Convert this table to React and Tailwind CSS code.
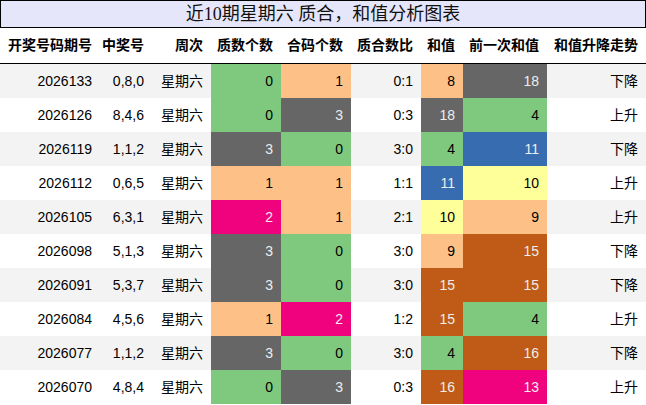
import React from "react";

const C = {
  g: "bg-[#7fc97f] text-black",
  o: "bg-[#fdc086] text-black",
  y: "bg-[#ffff99] text-black",
  b: "bg-[#386cb0] text-[#eeeeee]",
  p: "bg-[#f0027f] text-[#eeeeee]",
  r: "bg-[#bf5b17] text-[#eeeeee]",
  k: "bg-[#666666] text-[#eeeeee]",
};

const rows = [
  ["2026133", "0,8,0", "0", "g", "1", "o", "0:1", "8", "o", "18", "k", "下降"],
  ["2026126", "8,4,6", "0", "g", "3", "k", "0:3", "18", "k", "4", "g", "上升"],
  ["2026119", "1,1,2", "3", "k", "0", "g", "3:0", "4", "g", "11", "b", "下降"],
  ["2026112", "0,6,5", "1", "o", "1", "o", "1:1", "11", "b", "10", "y", "上升"],
  ["2026105", "6,3,1", "2", "p", "1", "o", "2:1", "10", "y", "9", "o", "上升"],
  ["2026098", "5,1,3", "3", "k", "0", "g", "3:0", "9", "o", "15", "r", "下降"],
  ["2026091", "5,3,7", "3", "k", "0", "g", "3:0", "15", "r", "15", "r", "下降"],
  ["2026084", "4,5,6", "1", "o", "2", "p", "1:2", "15", "r", "4", "g", "上升"],
  ["2026077", "1,1,2", "3", "k", "0", "g", "3:0", "4", "g", "16", "r", "下降"],
  ["2026070", "4,8,4", "0", "g", "3", "k", "0:3", "16", "r", "13", "p", "上升"],
];

const widths = ["w-[100px]", "w-[52px]", "w-[59px]", "w-[70px]", "w-[70px]", "w-[70px]", "w-[42px]", "w-[84px]", "w-[99px]"];
const headers = ["开奖号码期号", "中奖号", "周次", "质数个数", "合码个数", "质合数比", "和值", "前一次和值", "和值升降走势"];

function Cell({ w, cls = "", children }) {
  return (
    <div className={`${w} shrink-0 flex items-center justify-end pr-2 h-full ${cls}`}>{children}</div>
  );
}

export default function App() {
  return (
    <div
      className="w-[646px] h-[405px] bg-white overflow-hidden text-[14px] text-black"
      style={{ fontFamily: '"Liberation Sans", "Noto Sans CJK SC", sans-serif' }}
    >
      <div
        className="h-[28px] border border-black bg-[#e6e6fa] flex items-center justify-center text-[18px] text-[#111]"
        style={{ fontFamily: '"Liberation Serif", "Noto Sans CJK SC", serif' }}
      >
        近10期星期六 质合，和值分析图表
      </div>
      <div className="h-[36px] border-b border-black flex font-bold">
        {headers.map((h, i) => (
          <Cell key={i} w={widths[i]}>{h}</Cell>
        ))}
      </div>
      {rows.map((r, i) => (
        <div key={i} className={`h-[34px] flex ${i % 2 === 0 ? "bg-[#f3f3f3]" : "bg-white"}`}>
          <Cell w={widths[0]}>{r[0]}</Cell>
          <Cell w={widths[1]}>{r[1]}</Cell>
          <Cell w={widths[2]}>星期六</Cell>
          <Cell w={widths[3]} cls={C[r[3]]}>{r[2]}</Cell>
          <Cell w={widths[4]} cls={C[r[5]]}>{r[4]}</Cell>
          <Cell w={widths[5]}>{r[6]}</Cell>
          <Cell w={widths[6]} cls={C[r[8]]}>{r[7]}</Cell>
          <Cell w={widths[7]} cls={C[r[10]]}>{r[9]}</Cell>
          <Cell w={widths[8]}>{r[11]}</Cell>
        </div>
      ))}
    </div>
  );
}
